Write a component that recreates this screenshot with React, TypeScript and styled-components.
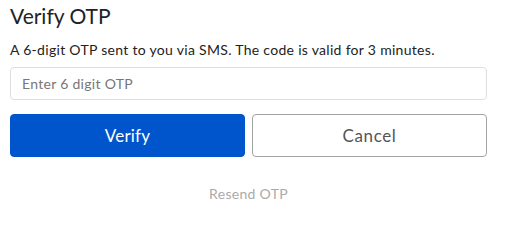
import styled, { createGlobalStyle } from "styled-components";

const GlobalStyle = createGlobalStyle`
  * {
    box-sizing: border-box;
  }

  body {
    margin: 0;
    background: #ffffff;
    font-family: "Lato", "Liberation Sans", sans-serif;
  }
`;

function App() {
  return (
    <>
      <GlobalStyle />
      <Container>
        <Title>Verify OTP</Title>
        <Subtitle>
          A 6-digit OTP sent to you via SMS. The code is valid for 3 minutes.
        </Subtitle>
        <Input type="text" placeholder="Enter 6 digit OTP" />
        <Actions>
          <Button $primary>Verify</Button>
          <Button>Cancel</Button>
        </Actions>
        <Resend>Resend OTP</Resend>
      </Container>
    </>
  );
}

export default App;

const Container = styled.div`
  display: flex;
  flex-direction: column;
  width: 477px;
  margin-left: 10px;
  padding-top: 3px;
`;

const Title = styled.h2`
  margin: 0;
  font-size: 21px;
  font-weight: 400;
  line-height: 26px;
  color: #222222;
`;

const Subtitle = styled.p`
  margin: 12px 0 0;
  font-size: 14px;
  line-height: 18px;
  letter-spacing: 0.3px;
  color: #222222;
`;

const Input = styled.input`
  margin-top: 8px;
  height: 33px;
  padding: 0 11px;
  border: 1px solid #dedede;
  border-radius: 4px;
  font-family: inherit;
  font-size: 14px;
  letter-spacing: 0.3px;
  color: #333333;
  outline: none;

  &::placeholder {
    color: #777777;
  }
`;

const Actions = styled.div`
  display: grid;
  grid-template-columns: 1fr 1fr;
  column-gap: 7px;
  margin-top: 14px;
`;

const Button = styled.button<{ $primary?: boolean }>`
  height: 43px;
  border-radius: 4px;
  border: 1px solid ${(p) => (p.$primary ? "#0055cc" : "#a3a3a3")};
  background: ${(p) => (p.$primary ? "#0055cc" : "#ffffff")};
  color: ${(p) => (p.$primary ? "#ffffff" : "#555555")};
  font-family: inherit;
  font-size: 17px;
  letter-spacing: ${(p) => (p.$primary ? "0.2px" : "0.6px")};
  cursor: pointer;
`;

const Resend = styled.button`
  align-self: center;
  margin-top: 28px;
  padding: 0;
  border: none;
  background: none;
  font-family: inherit;
  font-size: 14px;
  letter-spacing: 0.3px;
  color: #aaaaaa;
  cursor: pointer;
`;
